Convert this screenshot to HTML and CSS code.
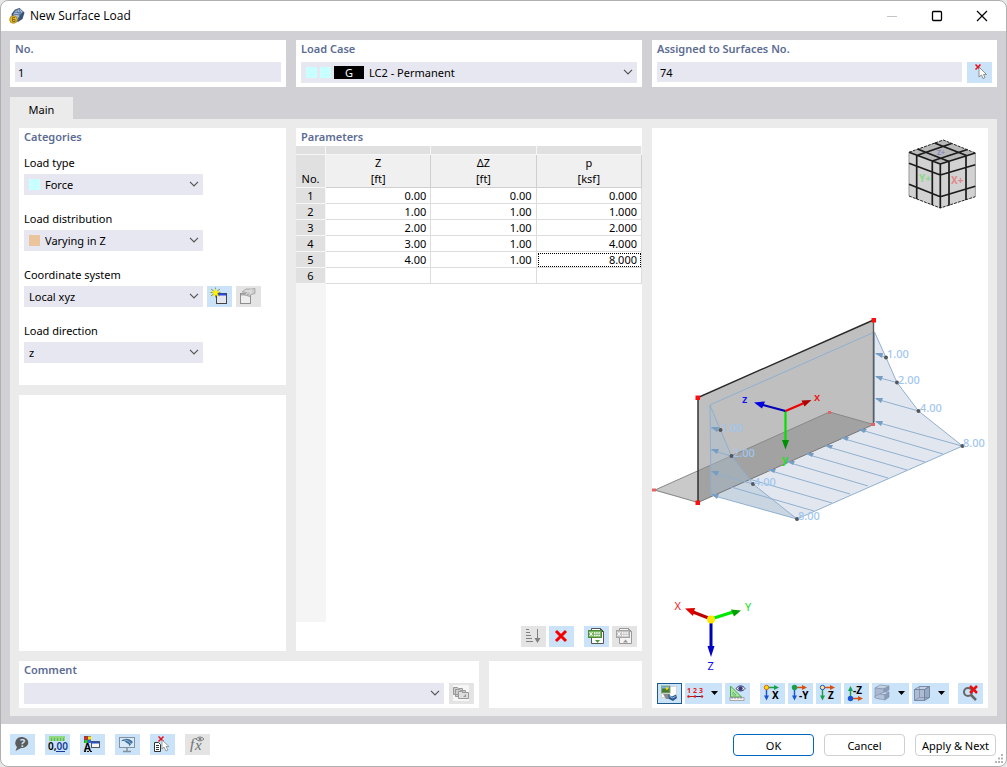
FILE: index.html
```
<!DOCTYPE html>
<html lang="en">

<head>
    <meta charset="UTF-8">
    <meta name="viewport" content="width=device-width, initial-scale=1.0">
    <title>New Surface Load</title>
    <link rel="stylesheet" href="styles.css">
</head>

<body>
<div class="window">
    <header class="titlebar">
        <svg class="app-icon" width="16" height="16" viewBox="0 0 16 16">
            <path d="M2.500 6L6 1.500 10.500 0 15.500 4.500 13.500 11 9 14 3 10z" fill="#3a5170"/>
            <path d="M4 6.500L7 2l4-1 3 3-3 3-3 5z" fill="#a9bdd8"/>
            <path d="M4 6l7 1 3-3M7.500 2l3.500 5-2 6M5.500 4l7 1M10 1l2 5" fill="none" stroke="#4f6b95" stroke-width=".8"/>
            <circle cx="4.500" cy="11.500" r="3.800" fill="#e5bb2e" stroke="#a8821c" stroke-width=".8"/>
            <path d="M6 9.500H3.500v4H6v-2H4" fill="none" stroke="#8a6a12"/>
        </svg>
        <h1 class="title">New Surface Load</h1>
        <button class="win-btn" aria-label="Minimize"><svg width="12" height="12"><path d="M1 6.500h10" stroke="#c4c4c4"/></svg></button>
        <button class="win-btn" aria-label="Maximize"><svg width="12" height="12"><rect x="1.500" y="1.500" width="9" height="9" rx="1" fill="none" stroke="#000" stroke-width="1.300"/></svg></button>
        <button class="win-btn" aria-label="Close"><svg width="12" height="12"><path d="M1 1l10 10M11 1L1 11" stroke="#000" stroke-width="1.200"/></svg></button>
    </header>

    <main class="content">
        <div class="top-row">
            <section class="panel">
                <label class="panel-title" for="load_no">No.</label>
                <div class="row"><input type="text" class="inp" id="load_no" value="1"></div>
            </section>
            <section class="panel">
                <label class="panel-title" for="load_case">Load Case</label>
                <div class="row">
                    <div class="combo">
                        <span class="swatch cyan"></span>
                        <span class="swatch cyan"></span>
                        <span class="badge">G</span>
                        <select id="load_case"><option>LC2 - Permanent</option></select>
                    </div>
                </div>
            </section>
            <section class="panel">
                <label class="panel-title" for="surfaces">Assigned to Surfaces No.</label>
                <div class="row">
                    <input type="text" class="inp" id="surfaces" value="74">
                    <button class="icon-btn" aria-label="Select surfaces">
                        <svg width="25" height="21">
                            <path d="M8.500 2.500l5 5M13.500 2.500l-5 5" stroke="#e8121c" stroke-width="1.600"/>
                            <path d="M12 5v10l2.500-2 1.500 3.500 2-1-1.500-3h3z" fill="#fff" stroke="#777" stroke-width=".8"/>
                        </svg>
                    </button>
                </div>
            </section>
        </div>

        <nav class="tabs"><button class="tab">Main</button></nav>

        <div class="workspace">
            <section class="panel categories">
                <h2 class="panel-title">Categories</h2>
                <div class="fields">
                    <div class="field">
                        <label for="load_type">Load type</label>
                        <div class="field-row">
                            <div class="combo"><span class="swatch cyan"></span><select id="load_type"><option>Force</option></select></div>
                        </div>
                    </div>
                    <div class="field">
                        <label for="load_dist">Load distribution</label>
                        <div class="field-row">
                            <div class="combo"><span class="swatch orange"></span><select id="load_dist"><option>Varying in Z</option></select></div>
                        </div>
                    </div>
                    <div class="field">
                        <label for="coord_sys">Coordinate system</label>
                        <div class="field-row">
                            <div class="combo"><select id="coord_sys"><option>Local xyz</option></select></div>
                            <button class="icon-btn" aria-label="New coordinate system">
                                <svg width="25" height="21">
                                    <rect x="9.500" y="7.500" width="10" height="10" fill="#e4e7ee" stroke="#444"/>
                                    <path d="M10 8.500h9" stroke="#2a48e8" stroke-width="2"/>
                                    <path d="M8.500 1.500v10M4 3l9 7M13 3l-9 7M3.500 6.500h10" stroke="#77803a" stroke-width=".8"/>
                                    <path d="M8.500 2.500l1.200 2.800 3 .2-2.200 2 .8 3-2.800-1.600-2.600 1.600.8-3-2.300-2 3-.2z" fill="#fff200"/>
                                </svg>
                            </button>
                            <button class="icon-btn off" aria-label="Edit coordinate system" disabled>
                                <svg width="25" height="21">
                                    <rect x="4.500" y="7.500" width="10" height="10" fill="#eee" stroke="#8f8f8f"/>
                                    <path d="M5 8.500h9" stroke="#aaa" stroke-width="2"/>
                                    <path d="M6 6l4-3h5l4-.5v5l-4 1-1.500 2-2-.5 1-2-2 1.500-2-1 2-2z" fill="#cdcdcd" stroke="#999" stroke-width=".7"/>
                                    <path d="M9 5h5M15 3v5" stroke="#f0f0f0" stroke-width=".8"/>
                                </svg>
                            </button>
                        </div>
                    </div>
                    <div class="field">
                        <label for="load_dir">Load direction</label>
                        <div class="field-row">
                            <div class="combo"><select id="load_dir"><option>z</option></select></div>
                        </div>
                    </div>
                </div>
            </section>

            <section class="panel blank"></section>

            <section class="panel parameters">
                <h2 class="panel-title">Parameters</h2>
                <div class="table-area">
                    <table>
                        <thead>
                        <tr class="strip"><th class="no"></th><th></th><th></th><th></th></tr>
                        <tr class="head">
                            <th class="no">No.</th>
                            <th>Z<br>[ft]</th>
                            <th>ΔZ<br>[ft]</th>
                            <th>p<br>[ksf]</th>
                        </tr>
                        </thead>
                        <tbody>
                        <tr><th class="no">1</th><td>0.00</td><td>0.00</td><td>0.000</td></tr>
                        <tr><th class="no">2</th><td>1.00</td><td>1.00</td><td>1.000</td></tr>
                        <tr><th class="no">3</th><td>2.00</td><td>1.00</td><td>2.000</td></tr>
                        <tr><th class="no">4</th><td>3.00</td><td>1.00</td><td>4.000</td></tr>
                        <tr><th class="no">5</th><td>4.00</td><td>1.00</td><td class="active">8.000</td></tr>
                        <tr><th class="no">6</th><td></td><td></td><td></td></tr>
                        </tbody>
                    </table>
                </div>
                <div class="toolbar right">
                    <button class="icon-btn off" aria-label="Sort" disabled>
                        <svg width="25" height="21"><path d="M5 3.500h3M5 6.500h4M5 9.500h5M5 12.500h6M5 15.500h7M16.500 3v11" stroke="#808080"/><path d="M13.500 12h6l-3 5z" fill="#808080"/></svg>
                    </button>
                    <button class="icon-btn" aria-label="Delete rows">
                        <svg width="25" height="21"><path d="M7 5l10 10M17 5L7 15" stroke="#f40000" stroke-width="3"/></svg>
                    </button>
                    <button class="icon-btn group" aria-label="Export to spreadsheet">
                        <svg width="25" height="21">
                            <path d="M7.500 2.500h9l3 3v12h-12z" fill="#fff" stroke="#555"/><path d="M16 2l4 4h-4z" fill="#444"/>
                            <rect x="4.500" y="4.500" width="13" height="7" fill="#79b45f" stroke="#4c8b36"/>
                            <path d="M5.500 6l3 4M8.500 6l-3 4" stroke="#fff"/><path d="M10 7h6M10 9.500h6" stroke="#fff" stroke-width="1.500" stroke-dasharray="1.500 .7"/>
                            <path d="M11 14h5l-2.500 3z" fill="#4c9a3c"/>
                        </svg>
                    </button>
                    <button class="icon-btn off" aria-label="Import from spreadsheet" disabled>
                        <svg width="25" height="21">
                            <path d="M7.500 2.500h9l3 3v12h-12z" fill="#f4f4f4" stroke="#999"/><path d="M16 2l4 4h-4z" fill="#999"/>
                            <rect x="4.500" y="4.500" width="13" height="7" fill="#c4c4c4" stroke="#a4a4a4"/>
                            <path d="M5.500 6l3 4M8.500 6l-3 4" stroke="#fff"/><path d="M10 7h6M10 9.500h6" stroke="#fff" stroke-width="1.500" stroke-dasharray="1.500 .7"/>
                            <path d="M11 16.500h5l-2.500-3z" fill="#999"/>
                        </svg>
                    </button>
                </div>
            </section>

            <div class="bottom-row">
                <section class="panel">
                    <label class="panel-title" for="comment">Comment</label>
                    <div class="row">
                        <div class="combo"><select id="comment"><option></option></select></div>
                        <button class="icon-btn off" aria-label="Comment library" disabled>
                            <svg width="25" height="21">
                                <rect x="4" y="2" width="16" height="16" fill="#f6f6f6"/>
                                <g fill="#ccc" stroke="#999"><path d="M4.500 4.500h4l1 1h4v6h-9zM6.500 6.500h4l1 1h5v6h-10z"/><path d="M9.500 8.500h3l1 1h6v6h-10z" fill="#dedede"/></g>
                                <path d="M14 14l3-3v3z" fill="#999"/>
                            </svg>
                        </button>
                    </div>
                </section>
                <section class="panel"></section>
            </div>

            <section class="panel preview">
                <svg class="scene" viewBox="652 128 336 555" role="img" aria-label="Load preview">
                    <!-- view cube -->
                    <g stroke-linejoin="round">
                        <path d="M909 152.300L943.300 140 975.300 153 940.300 164z" fill="#b9b9b9"/>
                        <path d="M909 152.300L940.300 164V208L909 196z" fill="#d2d2d2"/>
                        <path d="M975.300 153L940.300 164V208L975.300 196.700z" fill="#d2d2d2"/>
                        <path d="M909 152.300V196M975.300 153V196.700" stroke="#999"/>
                        <path d="M909 152.300L943.300 140 975.300 153M909 196l31.300 12 35-11.300" fill="none" stroke="#222" stroke-dasharray="3 1"/>
                        <path d="M909 152.300L940.300 164 975.300 153M940.300 164V208M909 163.300L940.300 175 975.300 164.700M909 184.300L940.300 196.700 975.300 186.300M916.700 155V199M932.300 161v44M949 161.500v44M966 156v44M917.500 149L949 161.500M934.500 143L966.500 155.500M916.700 155.500L951.500 143.500M932.300 161L967.500 149.500" fill="none" stroke="#1b1b1b" stroke-width="1.700"/>
                    </g>
                    <text class="cube-label" x="919" y="182" fill="#8ad98a">Y+</text>
                    <text class="cube-label" x="951" y="184" fill="#e08a8a">X+</text>
                    <text class="cube-label small" x="937" y="155" fill="#8787c4">Z+</text>

                    <!-- horizontal load area -->
                    <path d="M874.500 332L886 357.500 897 382.500 918.500 411 962.500 446 797 519 711 495 874 422z" fill="#e2e7ef"/>
                    <!-- wall and base slab -->
                    <path d="M698 397.500L873.500 320V424.500L698 502.500z" fill="#bfbfbf"/>
                    <path d="M652 490L655 490 829.500 412 873.500 424.500 698 502.500z" fill="#777" fill-opacity=".4"/>
                    <path d="M655 490L829.500 412l44 12.500M655 490l43 12.500" fill="none" stroke="#888"/>
                    <path d="M710 405L720.500 430 731.500 456 753 484 797 519 711 495z" fill="#a9bdcf" fill-opacity=".42"/>
                    <path d="M698 502.500L873.500 424.500" stroke="#777"/>
                    <g fill="none" stroke="#8fb0d0">
                        <path d="M711 495L710 405 874.500 332V422M710 405L720.500 430 731.500 456 753 484 797 519 962.500 446 918.500 411 897 382.500 886 357.500 874.500 332M711 495l86 24"/>
                        <path d="M876 354l10 3.500M876 377l21 5.500M876 399l42.500 12M876 422l86 24M711 428l9 3M711 450l20 6M711 472l42 12"/>
                        <path d="M858 429l85 25M841 438l84 24M825 446l82 24M806 454l82 24M787 462l81 24M768 470l82 24M749 479l83 24M731 487l83 24"/>
                    </g>
                    <g fill="#789dc2">
                        <path d="M875 353l8 0-1 5zM875 376l8 0-2 5zM875 398l8 0-2 5zM875 421l8 0-2 5z"/>
                        <path d="M711 427l8 0-2 5zM711 449l8 0-2 5zM711 471l8 0-2 5zM711 494l8 0-2 5z"/>
                        <path d="M858 429l9 0-3 4zM841 437l8 0-2 4zM825 445l8 0-2 4zM806 453l8 0-2 4zM787 461l8 0-2 4zM768 469l8 0-2 4z"/>
                    </g>
                    <path d="M698 502.500V397.500L873.500 320" fill="none" stroke="#292929" stroke-width="1.400"/>
                    <path d="M873.500 320V424.500" stroke="#5c5c5c" stroke-width="1.400"/>
                    <g fill="#555">
                        <circle cx="886" cy="357.500" r="2"/><circle cx="897" cy="382.500" r="2"/><circle cx="918.500" cy="411" r="2"/><circle cx="962.500" cy="446" r="2"/>
                        <circle cx="720.500" cy="430" r="2"/><circle cx="731.500" cy="456" r="2"/><circle cx="753" cy="484" r="2"/><circle cx="797" cy="519" r="2"/>
                    </g>
                    <g fill="#fa1010">
                        <rect x="695.500" y="395.500" width="4.500" height="4.500"/><rect x="871.500" y="318" width="4.500" height="4.500"/><rect x="695.500" y="500.500" width="4.500" height="4.500"/>
                        <path d="M652 488.500h4v3h-4zM828 411h3v3h-3zM871 423h4v3h-4z" fill="#e46464"/>
                    </g>
                    <g class="load-value">
                        <text x="887" y="358">1.00</text><text x="898" y="384">2.00</text><text x="920" y="412">4.00</text><text x="963" y="447">8.00</text>
                        <text x="721" y="432">1.00</text><text x="733" y="457">2.00</text><text x="754" y="486">4.00</text><text x="798" y="520">8.00</text>
                    </g>
                    <!-- local axes -->
                    <g stroke-width="2.200">
                        <path d="M785.500 411V442" stroke="#00e000"/><path d="M782 440h7l-3.500 9.500z" fill="#008f00"/>
                        <path d="M785.500 411L763 405" stroke="#0000b8"/><path d="M754 402.500l11-1-3 7z" fill="#0000e0"/>
                        <path d="M785.500 411L803 403.500" stroke="#f00000"/><path d="M811.500 400l-10 .5 3 6z" fill="#b00000"/>
                    </g>
                    <text class="axis local" x="814" y="401" fill="#f02020">x</text>
                    <text class="axis local" x="742" y="403" fill="#1010f0">z</text>
                    <text class="axis local" x="782" y="463" fill="#20e020">y</text>
                    <!-- global axes -->
                    <g stroke-width="3">
                        <path d="M711 619V648" stroke="#0000b8"/><path d="M707.500 646h7l-3.500 11z" fill="#0000c8"/>
                        <path d="M711 619L693 612" stroke="#c00000"/><path d="M685 608.500l10-.5-2 8z" fill="#e00000"/>
                        <path d="M711 619L733 612" stroke="#00e800"/><path d="M741 610.500l-10-1 3 7z" fill="#00a000"/>
                    </g>
                    <circle cx="711" cy="619.500" r="4" fill="#ffe800"/>
                    <text class="axis" x="674.500" y="610" fill="#f02020">X</text>
                    <text class="axis" x="745" y="611" fill="#20e020">Y</text>
                    <text class="axis" x="707.500" y="670" fill="#1010f0">Z</text>
                </svg>
                <div class="toolbar">
                    <button class="icon-btn pressed" aria-label="Render view">
                        <svg width="25" height="21">
                            <path d="M12.500 3.500h7v11h-15v-5h8z" fill="#fff" stroke="#bbb" stroke-dasharray="1 1"/>
                            <rect x="4.500" y="3" width="8.500" height="7" fill="#4c7c2f" stroke="#8fa68a"/><path d="M5 4.500h7" stroke="#79b5e8" stroke-width="2"/><circle cx="10" cy="5.500" r="1.200" fill="#ffe100"/>
                            <path d="M6 11h7v5H9z" fill="#8b8b8b"/><path d="M11 11.500l4 2 4-2 1 3.500-4 3-4-2z" fill="#2b5a90"/><path d="M12.500 13l3 2 3-1.500" fill="none" stroke="#9cc2e4"/>
                        </svg>
                    </button>
                    <button class="icon-btn wide" aria-label="Numbering">
                        <svg width="37" height="21">
                            <text class="tiny" x="2" y="10" fill="#e41818">1</text><text class="tiny" x="8" y="10" fill="#e41818">2</text><text class="tiny" x="14" y="10" fill="#e41818">3</text>
                            <path d="M3 13.500h15" stroke="#c01818"/><path d="M10 13.500h8" stroke="#24246c"/><circle cx="3.500" cy="13.500" r="1.200" fill="#e41818"/><circle cx="10" cy="13.500" r="1.200" fill="#e41818"/><circle cx="17" cy="13.500" r="1.200" fill="#e41818"/>
                            <path d="M26 8h7l-3.500 4z"/>
                        </svg>
                    </button>
                    <button class="icon-btn" aria-label="Display dimensions">
                        <svg width="25" height="21">
                            <path d="M5.500 3v11h11z" fill="#a6e8a0" stroke="#55a455"/><path d="M8 9v3h3z" fill="#cfe6f8" stroke="#55a455" stroke-width=".7"/>
                            <rect x="5" y="14.500" width="14" height="3" fill="#f2f2f2" stroke="#999" stroke-width=".8"/><path d="M7 14v2M10 14v2M13 14v2M16 14v2" stroke="#777" stroke-width=".7"/>
                            <path d="M11 5.500c3-4 7-3 9 0-2 3-6 3.500-9 0z" fill="#fff" stroke="#333366"/><circle cx="15.500" cy="5.500" r="2.200" fill="#3a3a80"/>
                        </svg>
                    </button>
                    <button class="icon-btn group" aria-label="View in X">
                        <svg width="25" height="21"><path d="M6.500 5V14" stroke="#1854d8" stroke-width="1.400"/><path d="M4 12.500h5l-2.500 5z" fill="#1854d8"/><path d="M7 4.500h8" stroke="#16a050" stroke-width="1.400"/><path d="M14 2l5 2.500-5 2.500z" fill="#16a050"/><circle cx="6.500" cy="4.500" r="2.200" fill="#ffe000" stroke="#e06020"/><text class="view" x="12" y="16">X</text></svg>
                    </button>
                    <button class="icon-btn" aria-label="View in -Y">
                        <svg width="25" height="21"><path d="M6.500 5V14" stroke="#1854d8" stroke-width="1.400"/><path d="M4 12.500h5l-2.500 5z" fill="#1854d8"/><path d="M7 4.500h8" stroke="#d85010" stroke-width="1.400"/><path d="M14 2l5 2.500-5 2.500z" fill="#d85010"/><circle cx="6.500" cy="4.500" r="2.700" fill="#16a050"/><text class="view" x="11" y="16">-Y</text></svg>
                    </button>
                    <button class="icon-btn" aria-label="View in Z">
                        <svg width="25" height="21"><path d="M6.500 5V14" stroke="#16a050" stroke-width="1.400"/><path d="M4 12.500h5l-2.500 5z" fill="#16a050"/><path d="M7 4.500h8" stroke="#d85010" stroke-width="1.400"/><path d="M14 2l5 2.500-5 2.500z" fill="#d85010"/><circle cx="6.500" cy="4.500" r="2.200" fill="#ffe880" stroke="#1854d8"/><text class="view" x="12" y="16">Z</text></svg>
                    </button>
                    <button class="icon-btn" aria-label="View in -Z">
                        <svg width="25" height="21"><path d="M6.500 15V6" stroke="#16a050" stroke-width="1.400"/><path d="M4 8h5l-2.500-5z" fill="#16a050"/><path d="M7 15.500h8" stroke="#d85010" stroke-width="1.400"/><path d="M14 13l5 2.500-5 2.500z" fill="#d85010"/><circle cx="6.500" cy="15.500" r="2.700" fill="#1854d8"/><text class="view" x="9" y="11">-Z</text></svg>
                    </button>
                    <button class="icon-btn wide" aria-label="Model view">
                        <svg width="37" height="21">
                            <g stroke="#8192ae" stroke-width=".7">
                                <path d="M3 5l5-3 9 1-5 3z" fill="#c3d0e2"/><path d="M3 5l9 1v4l-4 1v5l-5-2z" fill="#a9b9d2"/><path d="M12 6l5-3v4l-5 3z" fill="#8b9cba"/>
                                <path d="M8 11l4-2 5 0-4 3z" fill="#c3d0e2"/><path d="M3 13l5-2 5 1v5l-10-2z" fill="#b3c2d8"/><path d="M13 12l4-3v5l-4 3z" fill="#8b9cba"/>
                            </g>
                            <path d="M26 8h7l-3.500 4z"/>
                        </svg>
                    </button>
                    <button class="icon-btn wide" aria-label="Box view">
                        <svg width="37" height="21"><g stroke="#70829e" stroke-width=".9"><path d="M2.500 6.500h10v11h-10z" fill="#adbcd3"/><path d="M2.500 6.500l5-3h10l-5 3z" fill="#c5d0e2"/><path d="M12.500 6.500l5-3v11l-5 3z" fill="#98a9c4"/><path d="M7.500 3.500v11h10M7.500 14.500l-5 3" fill="none" stroke-width=".6"/></g><path d="M26 8h7l-3.500 4z"/></svg>
                    </button>
                    <button class="icon-btn last" aria-label="Reset zoom">
                        <svg width="25" height="21"><circle cx="10" cy="9" r="4" fill="none" stroke="#666" stroke-width="2"/><path d="M13 12l5 5" stroke="#666" stroke-width="2.500"/><path d="M12 3l7 7M19 3l-7 7" stroke="#e81010" stroke-width="2.500"/></svg>
                    </button>
                </div>
            </section>
        </div>
    </main>

    <footer class="footer">
        <button class="icon-btn" aria-label="Help">
            <svg width="25" height="21"><path d="M12.500 3a6.500 5.500 0 1 1-1.500 11l-5.500 3 1.500-4a6.500 6 0 0 1 5.500-10z" fill="#5c5c5c"/><text class="help" x="10" y="13">?</text></svg>
        </button>
        <button class="icon-btn" aria-label="Units">
            <svg width="25" height="21"><path d="M4 2h16v5H4z" fill="#8fda80"/><path d="M6.500 4v3M9.500 4v3M12.500 4v3M15.500 4v3M18.500 4v3" stroke="#63b458"/><text class="units" x="3" y="16">0,<tspan fill="#183c9c">00</tspan></text><path d="M11 17.500h9" stroke="#183c9c"/></svg>
        </button>
        <button class="icon-btn" aria-label="Display properties">
            <svg width="25" height="21"><path d="M4 2h7v7H4z" fill="#555"/><path d="M4.500 2.500h3v3h-3z" fill="#f02020"/><path d="M8 2.500h3v3H8z" fill="#ffe800"/><path d="M4.500 6h3v3h-3z" fill="#20d020"/><path d="M8 6h3v3H8z" fill="#3060f0"/><text class="view" x="4" y="17">A</text><path d="M4 17.500h8" stroke="#111" stroke-dasharray="2 1"/><rect x="11.500" y="7.500" width="8" height="6" fill="#f6f6f6" stroke="#555"/><path d="M12 8.500h7" stroke="#2450c0" stroke-width="2"/></svg>
        </button>
        <button class="icon-btn" aria-label="Graphic settings">
            <svg width="25" height="21"><rect x="4.500" y="3.500" width="15" height="10" fill="#d8eaf8" stroke="#84909c"/><path d="M12 14v3M8 17.500h8" stroke="#84909c" stroke-width="1.500"/><path d="M6 7.500C8 4 14 3.500 18 8l-4 4.500c.5-2-.5-3-2.500-3.500C10 7 8 6.500 6 7.500z" fill="#43719c"/><path d="M9 6c3 0 6 2 7 4" fill="none" stroke="#a6c9e8" stroke-width=".8"/></svg>
        </button>
        <button class="icon-btn" aria-label="Select objects">
            <svg width="25" height="21"><path d="M8.500 2.500l5 5M13.500 2.500l-5 5" stroke="#e8121c" stroke-width="1.500"/><path d="M4.500 8.500h4l2 2v7h-6z" fill="#fff" stroke="#333"/><path d="M6 11.500h3M6 13.500h3M6 15.500h3" stroke="#333"/><path d="M12 6v9l2-2 2 4 2-1-2-3.500h3z" fill="#fff" stroke="#888" stroke-width=".8"/></svg>
        </button>
        <button class="icon-btn off" aria-label="Formula" disabled>
            <svg width="25" height="21"><text class="formula" x="5" y="15">f</text><text class="formula" x="10" y="16">x</text><path d="M11 5q4-4 8 0-4 4-8 0z" fill="#eee" stroke="#808080"/><circle cx="15" cy="5" r="1.500" fill="#808080"/></svg>
        </button>
        <div class="actions">
            <button class="btn primary">OK</button>
            <button class="btn">Cancel</button>
            <button class="btn">Apply &amp; Next</button>
        </div>
        <svg class="grip" width="10" height="10"><path d="M7 1h2M4 4.500h2M7 4.500h2M1 8h2M4 8h2M7 8h2" stroke="#b4b4b4" stroke-width="2"/></svg>
    </footer>
</div>
</body>

</html>
```
FILE: styles.css
```
* {
    box-sizing: border-box;
}
body {
    margin: 0;
    background-color: #e8e8e8;
    font-family: "Noto Sans", "Open Sans", sans-serif;
    font-size: 11px;
    color: #000;
}
button, input, select {
    font: inherit;
    color: inherit;
    margin: 0;
}
svg {
    display: block;
}
.window {
    display: flex;
    flex-direction: column;
    min-height: 100vh;
    border: 1px solid #b0b0b0;
    border-radius: 8px;
    overflow: hidden;
    background-color: #fff;
}

/* title bar */
.titlebar {
    display: flex;
    align-items: center;
    height: 30px;
    padding: 0 2px 0 8px;
}
.title {
    flex: 1;
    margin: 0 0 0 5px;
    font-family: "Open Sans", "Noto Sans", sans-serif;
    font-size: 12px;
    line-height: 16px;
    font-weight: normal;
}
.win-btn {
    display: flex;
    justify-content: center;
    align-items: center;
    width: 45px;
    height: 28px;
    padding: 0;
    border: 0;
    background: none;
}

.content {
    flex: 1;
    display: flex;
    flex-direction: column;
    padding: 9px 9px 8px;
    background-color: #d0d0d5;
}
.top-row {
    display: grid;
    grid-template-columns: 276fr 346fr 345fr;
    gap: 10px;
}
.panel {
    min-width: 0;
    background-color: #fff;
}
.panel-title {
    display: block;
    margin: 0;
    padding-left: 5px;
    line-height: 18px;
    font-size: 11px;
    font-weight: 600;
    color: #5c6c94;
}
.row {
    display: flex;
    gap: 5px;
    padding: 4px 5px;
}
.inp {
    flex: 1;
    min-width: 0;
    height: 20px;
    padding: 0 3px;
    border: 0;
    background-color: #e7e7f1;
}
.combo {
    flex: 1;
    display: flex;
    align-items: center;
    gap: 3px;
    height: 21px;
    padding-left: 5px;
    background: #e7e7f1 url("data:image/svg+xml,%3Csvg xmlns='http://www.w3.org/2000/svg' width='10' height='6'%3E%3Cpath d='M1 .8l4 4 4-4' fill='none' stroke='%23555' stroke-width='1.2'/%3E%3C/svg%3E") no-repeat right 4px top 7px;
}
.combo select {
    flex: 1;
    min-width: 0;
    height: 20px;
    padding: 0 16px 0 0;
    border: 0;
    background: none;
    appearance: none;
}
.swatch {
    width: 11px;
    height: 11px;
}
.swatch + select {
    padding-left: 2px;
}
.cyan {
    background-color: #c8ffff;
}
.orange {
    background-color: #ecc49c;
}
.badge {
    width: 30px;
    margin-right: 2px;
    line-height: 13px;
    text-align: center;
    background-color: #000;
    color: #fff;
}
.icon-btn {
    width: 25px;
    height: 21px;
    padding: 0;
    border: 0;
    background-color: #cbe3f8;
}
.icon-btn.wide {
    width: 37px;
}
.icon-btn.off {
    background-color: #e4e4e4;
}
.icon-btn.pressed {
    outline: 1px solid #1c5a94;
    outline-offset: -1px;
}

/* tabs */
.tabs {
    display: flex;
    margin-top: 10px;
}
.tab {
    width: 63px;
    height: 22px;
    padding: 3px 0 0;
    border: 0;
    background-color: #ebebeb;
}

.workspace {
    flex: 1;
    display: grid;
    grid-template-columns: 267fr 346fr 336fr;
    grid-template-rows: auto 1fr auto;
    gap: 10px;
    padding: 9px 9px 8px;
    background-color: #ebebeb;
}
.fields {
    display: grid;
    gap: 15px;
    padding: 8px 5px 22px;
}
.field label {
    display: block;
    margin-bottom: 2px;
    line-height: 18px;
}
.field-row {
    display: grid;
    grid-template-columns: minmax(0, 179px) 25px 25px;
    column-gap: 4px;
}
.parameters {
    grid-column: 2;
    grid-row: 1 / 3;
    display: flex;
    flex-direction: column;
}
.table-area {
    flex: 1;
    background: linear-gradient(to right, #f5f5f5 30px, #fff 30px);
}
table {
    width: 100%;
    table-layout: fixed;
    border-spacing: 0;
}
th, td {
    height: 16px;
    padding: 0 4px;
    line-height: 15px;
    font-weight: normal;
    border-right: 1px solid #dcdcdc;
    border-bottom: 1px solid #dcdcdc;
}
td {
    text-align: right;
    background-color: #fff;
}
.no {
    width: 30px;
    padding: 0;
    background-color: #e0e0e0;
    border-color: #f6f6f6;
}
.strip th {
    height: 9px;
    padding: 0;
    background-color: #e0e0e0;
    border-color: #f6f6f6;
}
.head th {
    height: 33px;
    padding: 0;
    line-height: 16px;
    vertical-align: bottom;
    background-color: #f0f0f0;
    border-color: #cfcfcf;
}
.head .no {
    background-color: #e0e0e0;
    border-color: #f6f6f6;
}
.active {
    outline: 1px dotted #000;
    outline-offset: -2px;
}
.toolbar {
    display: flex;
    gap: 3px;
    padding: 0 5px 4px;
}
.toolbar.right {
    justify-content: flex-end;
    padding-top: 4px;
}
.toolbar .group {
    margin-left: 7px;
}
.toolbar .last {
    margin-left: auto;
}
.bottom-row {
    grid-column: 1 / 3;
    grid-row: 3;
    display: grid;
    grid-template-columns: 460fr 153fr;
    gap: 10px;
}

/* preview */
.preview {
    grid-column: 3;
    grid-row: 1 / 4;
    display: flex;
    flex-direction: column;
}
.scene {
    flex: 1;
    width: 100%;
    min-height: 0;
}
.load-value {
    font-size: 11px;
    font-weight: 500;
    fill: #9fc6ee;
}
.axis {
    font-size: 11px;
}
.axis.local {
    font-weight: 600;
}
.cube-label {
    font-size: 10px;
    font-weight: bold;
}
.cube-label.small {
    font-size: 7px;
}
.view {
    font-size: 10px;
    font-weight: bold;
}
.tiny {
    font-size: 7px;
    font-weight: bold;
}
.units {
    font-size: 10px;
    font-weight: 600;
}
.help {
    font-size: 11px;
    font-weight: bold;
    fill: #cbe3f8;
}
.formula {
    font-family: "Liberation Serif", serif;
    font-size: 15px;
    font-style: italic;
    fill: #707070;
}

/* footer */
.footer {
    position: relative;
    display: flex;
    align-items: flex-start;
    gap: 10px;
    height: 42px;
    padding: 10px 10px 0 9px;
}
.actions {
    display: flex;
    gap: 10px;
    margin-left: auto;
}
.btn {
    width: 81px;
    height: 22px;
    padding: 0;
    border: 1px solid #d0d0d0;
    border-radius: 4px;
    background-color: #fff;
}
.btn.primary {
    border-color: #0067c0;
}
.grip {
    position: absolute;
    right: 2px;
    bottom: 2px;
}
```
